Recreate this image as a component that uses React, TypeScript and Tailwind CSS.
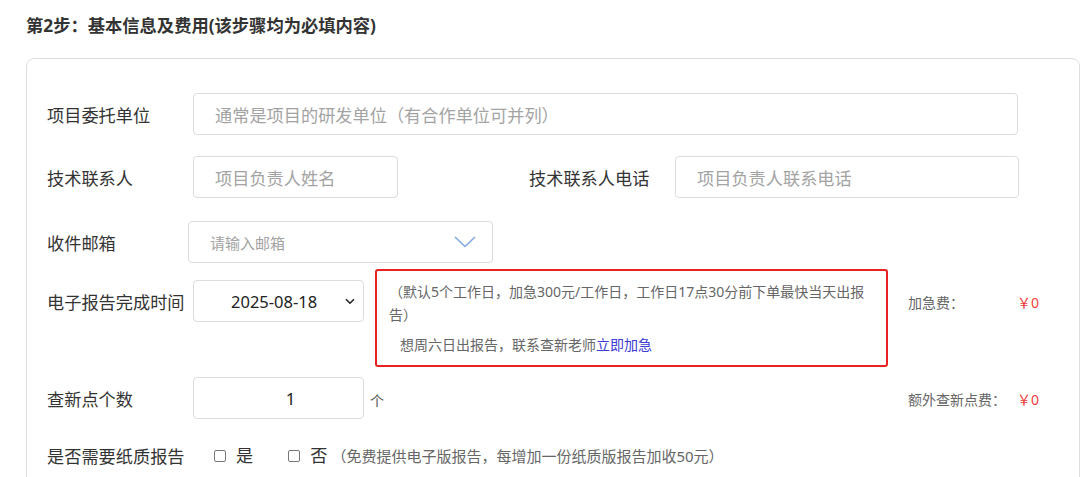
const font = {
  fontFamily: '"Noto Sans", "Noto Sans CJK SC", sans-serif',
};

const Label: React.FC<{ text: string; w?: string }> = ({ text, w = "w-[146px]" }) => (
  <div className={`${w} shrink-0 pt-[3px] text-[17.2px] text-[#333]`}>{text}</div>
);

const TextInput: React.FC<{ placeholder: string; w: string }> = ({ placeholder, w }) => (
  <input
    readOnly
    placeholder={placeholder}
    className={`${w} h-[42px] shrink-0 rounded-[4px] border border-[#dcdcdc] bg-white px-[21px] pt-[2px] text-[17.2px] text-[#333] outline-none placeholder:text-[#a3a3a3]`}
  />
);

const Fee: React.FC<{ label: string }> = ({ label }) => (
  <div className="flex items-center pt-[2px] text-[14px]">
    <span className="w-[109px] text-[#666]">{label}</span>
    <span className="text-[#f03c3c]">￥0</span>
  </div>
);

const Check: React.FC<{ text: string }> = ({ text }) => (
  <label className="flex items-center gap-[10px] pt-[2px] text-[17.2px] text-[#333]">
    <span className="h-[12px] w-[12px] rounded-[2px] border border-[#777] bg-white" />
    {text}
  </label>
);

export default function App() {
  return (
    <div style={font} className="h-[477px] overflow-hidden bg-white pl-[26px]">
      <h2 className="pt-[14px] text-[17.3px] font-bold leading-[24px] text-[#333]">
        第2步：基本信息及费用(该步骤均为必填内容)
      </h2>

      <div className="mt-[20px] h-[460px] rounded-[8px] border border-[#dedede] pt-[34px] pl-[20px]">
        {/* 委托单位 */}
        <div className="flex h-[42px] items-center">
          <Label text="项目委托单位" />
          <TextInput w="w-[825px]" placeholder="通常是项目的研发单位（有合作单位可并列）" />
        </div>

        {/* 联系人 */}
        <div className="mt-[21px] flex h-[42px] items-center">
          <Label text="技术联系人" />
          <TextInput w="w-[205px]" placeholder="项目负责人姓名" />
          <div className="ml-[131px]">
            <Label text="技术联系人电话" />
          </div>
          <TextInput w="w-[344px]" placeholder="项目负责人联系电话" />
        </div>

        {/* 邮箱 */}
        <div className="mt-[23px] flex h-[42px] items-center">
          <Label text="收件邮箱" w="w-[141px]" />
          <div className="flex h-[42px] w-[305px] items-center justify-between rounded-[4px] border border-[#dcdcdc] pl-[21px] pr-[16px]">
            <span className="pt-[2px] text-[15px] text-[#a3a3a3]">请输入邮箱</span>
            <svg width="22" height="12" viewBox="0 0 22 12" fill="none">
              <path d="M1 1l10 9.5L21 1" stroke="#7fa9e2" strokeWidth="1.6" />
            </svg>
          </div>
        </div>

        {/* 完成时间 */}
        <div className="mt-[6px] flex items-start">
          <div className="mt-[11px] flex h-[42px] items-center">
            <Label text="电子报告完成时间" />
          </div>
          <div className="flex w-[715px] shrink-0 items-start">
            <div className="mt-[11px] flex h-[42px] w-[171px] items-center rounded-[4px] border border-[#dcdcdc] pl-[37px] pr-[8px]">
              <span className="flex-1 pt-[2px] text-[16.5px] text-[#222]">2025-08-18</span>
              <svg width="10" height="7" viewBox="0 0 10 7" fill="none">
                <path d="M1 1.2l4 4 4-4" stroke="#222" strokeWidth="1.6" />
              </svg>
            </div>
            <div className="ml-[11px] w-[513px] rounded-[3px] border-2 border-[#e8231f] pt-[9px] pb-[9px] pl-[12px] pr-[19px] text-[14px] leading-[23px] text-[#666]">
              <p>（默认5个工作日，加急300元/工作日，工作日17点30分前下单最快当天出报告）</p>
              <p className="mt-[7px] pl-[11px]">
                想周六日出报告，联系查新老师<span className="text-[#3c3cd6]">立即加急</span>
              </p>
            </div>
          </div>
          <div className="mt-[11px] flex h-[42px] items-center">
            <Fee label="加急费：" />
          </div>
        </div>

        {/* 查新点 */}
        <div className="mt-[10px] flex h-[42px] items-center">
          <Label text="查新点个数" />
          <div className="flex w-[715px] shrink-0 items-center">
            <div className="flex h-[42px] w-[171px] items-center justify-center rounded-[4px] border border-[#dcdcdc] pl-[24px] pt-[2px] text-[17px] text-[#222]">
              1
            </div>
            <span className="ml-[6px] pt-[4px] text-[14px] text-[#555]">个</span>
          </div>
          <Fee label="额外查新点费：" />
        </div>

        {/* 纸质报告 */}
        <div className="mt-[15px] flex h-[42px] items-center">
          <Label text="是否需要纸质报告" />
          <div className="ml-[21px]">
            <Check text="是" />
          </div>
          <div className="ml-[35px]">
            <Check text="否" />
          </div>
          <span className="ml-[4px] pt-[2px] text-[15px] text-[#666]">
            （免费提供电子版报告，每增加一份纸质版报告加收50元）
          </span>
        </div>
      </div>
    </div>
  );
}
